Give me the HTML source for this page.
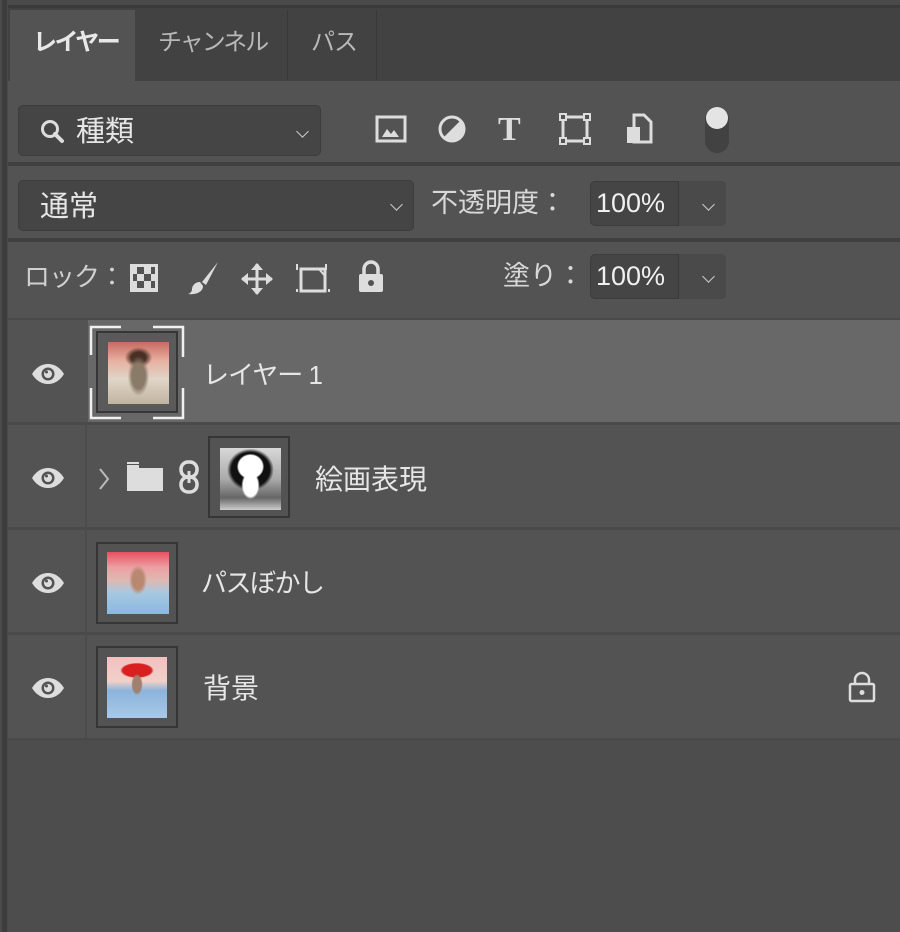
<!DOCTYPE html>
<html><head><meta charset="utf-8"><style>
*{margin:0;padding:0;box-sizing:border-box}
body{width:900px;height:932px;background:#4d4d4d;position:relative;overflow:hidden;font-family:"Liberation Sans","Noto Sans CJK JP",sans-serif;color:#dcdcdc}
.a{position:absolute}
.t{position:absolute;white-space:nowrap;line-height:1}
.box{position:absolute;background:#454545;border:1px solid #3c3c3c;border-radius:5px}
.chev{position:absolute;width:9px;height:9px;border-right:1.5px solid #ccc;border-bottom:1.5px solid #ccc;transform:rotate(45deg)}
.row{position:absolute;left:8px;right:0;background:#535353}
.eye{position:absolute;left:31px;width:34px;height:22px}
.frame{position:absolute;width:82px;height:82px;border:2px solid #363636}
</style></head><body>
<div class="a" style="left:0;top:0;width:900px;height:8px;background:#4a4a4a"></div>
<div class="a" style="left:0;top:5px;width:900px;height:3px;background:#3a3a3a"></div>
<div class="a" style="left:0;top:0;width:8px;height:932px;background:#4a4a4a"></div>
<div class="a" style="left:2px;top:0;width:5px;height:932px;background:#3d3d3d"></div>
<div class="a" style="left:8px;top:8px;width:892px;height:73px;background:#424242"></div>
<div class="a" style="left:10px;top:10px;width:125px;height:71px;background:#535353"></div>
<div class="a" style="left:287px;top:10px;width:1px;height:70px;background:#383838"></div>
<div class="a" style="left:376px;top:10px;width:1px;height:70px;background:#383838"></div>
<div class="t" style="left:33px;top:31px;font-size:24px;letter-spacing:-2.5px;color:#e8e8e8;font-weight:bold">レイヤー</div>
<div class="t" style="left:158px;top:31px;font-size:24px;letter-spacing:-2px;color:#b8b8b8">チャンネル</div>
<div class="t" style="left:311px;top:31px;font-size:24px;letter-spacing:-1px;color:#b8b8b8">パス</div>
<div class="a" style="left:8px;top:81px;width:892px;height:239px;background:#535353"></div>
<div class="a" style="left:8px;top:162px;width:892px;height:4px;background:#404040"></div>
<div class="a" style="left:8px;top:238px;width:892px;height:4px;background:#404040"></div>
<div class="box" style="left:18px;top:105px;width:303px;height:51px"></div>
<svg class="a" style="left:39px;top:118px" width="28" height="28" viewBox="0 0 28 28"><circle cx="11" cy="11" r="7.5" fill="none" stroke="#ddd" stroke-width="3"/><path d="M16 16l7 7" stroke="#ddd" stroke-width="4" stroke-linecap="round"/></svg>
<div class="t" style="left:76px;top:118px;font-size:29px;color:#e6e6e6">種類</div>
<div class="chev" style="left:298px;top:127px"></div>
<svg class="a" style="left:375px;top:114px" width="32" height="30" viewBox="0 0 32 30"><rect x="2" y="3" width="28" height="24" fill="none" stroke="#ddd" stroke-width="3"/><path d="M7 23l5-8 4 5 3-4 5 7z" fill="#ddd"/></svg>
<svg class="a" style="left:437px;top:114px" width="30" height="30" viewBox="0 0 30 30"><circle cx="15" cy="15" r="12" fill="none" stroke="#ddd" stroke-width="3"/><path d="M23.5 6.5A12 12 0 0 1 6.5 23.5z" fill="#ddd"/></svg>
<div class="t" style="left:498px;top:113px;font-size:34px;font-weight:bold;font-family:'Liberation Serif',serif;color:#ddd">T</div>
<svg class="a" style="left:558px;top:112px" width="34" height="34" viewBox="0 0 34 34"><rect x="5" y="5" width="24" height="24" fill="none" stroke="#ddd" stroke-width="3"/><g fill="#535353" stroke="#ddd" stroke-width="2"><rect x="2" y="2" width="6" height="6"/><rect x="26" y="2" width="6" height="6"/><rect x="2" y="26" width="6" height="6"/><rect x="26" y="26" width="6" height="6"/></g></svg>
<svg class="a" style="left:624px;top:113px" width="30" height="32" viewBox="0 0 30 32"><path d="M10 2h10l7 7v20H10z" fill="none" stroke="#ddd" stroke-width="3"/><rect x="3" y="14" width="13" height="16" fill="#ddd"/></svg>
<div class="a" style="left:705px;top:107px;width:24px;height:46px;border-radius:12px;background:#424242"></div>
<div class="a" style="left:706px;top:107px;width:22px;height:22px;border-radius:50%;background:#e4e4e4"></div>
<div class="box" style="left:18px;top:180px;width:396px;height:51px"></div>
<div class="t" style="left:40px;top:193px;font-size:29px;color:#e6e6e6">通常</div>
<div class="chev" style="left:392px;top:200px"></div>
<div class="t" style="left:431px;top:190px;font-size:27px;color:#d8d8d8">不透明度：</div>
<div class="box" style="left:590px;top:181px;width:136px;height:45px"></div>
<div class="a" style="left:678px;top:181px;width:48px;height:45px;background:#4a4a4a;border-left:1px solid #3a3a3a;border-radius:0 5px 5px 0"></div>
<div class="t" style="left:596px;top:190px;font-size:27px;color:#f0f0f0">100%</div>
<div class="chev" style="left:704px;top:200px"></div>
<div class="t" style="left:24px;top:264px;font-size:26px;letter-spacing:-1px;color:#d0d0d0">ロック：</div>
<svg class="a" style="left:129px;top:263px" width="30" height="30" viewBox="0 0 30 30"><rect x="1" y="1" width="28" height="28" fill="#ddd"/><g fill="#535353"><rect x="8" y="4" width="7" height="7"/><rect x="15" y="11" width="7" height="7"/><rect x="8" y="18" width="7" height="7"/><rect x="4" y="11" width="4" height="7"/><rect x="22" y="4" width="4" height="7"/><rect x="22" y="18" width="4" height="7"/></g></svg>
<svg class="a" style="left:186px;top:260px" width="36" height="36" viewBox="0 0 36 36"><path d="M32 2L16 22l4 3z" fill="#ddd"/><path d="M14 22c-5 0-8 4-8 7 0 2-1 4-4 5 8 1 15-2 15-8z" fill="#ddd"/></svg>
<svg class="a" style="left:240px;top:262px" width="34" height="34" viewBox="0 0 34 34"><path d="M17 2v30M2 17h30" stroke="#ddd" stroke-width="3"/><path d="M17 1l6 7H11zM17 33l6-7H11zM1 17l7 6V11zM33 17l-7 6V11z" fill="#ddd"/></svg>
<svg class="a" style="left:295px;top:261px" width="38" height="34" viewBox="0 0 38 34"><path d="M6 8h24v22H6z" fill="none" stroke="#ddd" stroke-width="3"/><path d="M2 3v6M31 3v6M2 28v3M34 28v3M24 8l6 7" stroke="#ddd" stroke-width="2"/></svg>
<svg class="a" style="left:356px;top:260px" width="30" height="34" viewBox="0 0 30 34"><path d="M8 14V9a7 7 0 0 1 14 0v5" fill="none" stroke="#ddd" stroke-width="3.5"/><rect x="3" y="14" width="24" height="18" rx="2" fill="#ddd"/><circle cx="15" cy="23" r="3" fill="#535353"/></svg>
<div class="t" style="left:503px;top:263px;font-size:27px;color:#d8d8d8">塗り：</div>
<div class="box" style="left:590px;top:254px;width:136px;height:45px"></div>
<div class="a" style="left:678px;top:254px;width:48px;height:45px;background:#4a4a4a;border-left:1px solid #3a3a3a;border-radius:0 5px 5px 0"></div>
<div class="t" style="left:596px;top:263px;font-size:27px;color:#f0f0f0">100%</div>
<div class="chev" style="left:704px;top:272px"></div>
<div class="a" style="left:8px;top:318px;width:892px;height:4px;background:#4a4a4a"></div>
<div class="row" style="top:320px;height:102px;background:#535353"></div>
<div class="a" style="left:88px;top:320px;width:812px;height:102px;background:#686868"></div>
<div class="row" style="top:424px;height:103px"></div>
<div class="row" style="top:530px;height:102px"></div>
<div class="row" style="top:635px;height:103px"></div>
<div class="a" style="left:8px;top:422px;width:892px;height:3px;background:#4a4a4a"></div>
<div class="a" style="left:8px;top:527px;width:892px;height:3px;background:#4a4a4a"></div>
<div class="a" style="left:8px;top:632px;width:892px;height:3px;background:#4a4a4a"></div>
<div class="a" style="left:8px;top:738px;width:892px;height:3px;background:#4a4a4a"></div>
<div class="a" style="left:85px;top:422px;width:2px;height:316px;background:#4c4c4c"></div>
<svg class="eye" style="top:363px" viewBox="0 0 34 22"><path d="M1 11C6 3 12 1 17 1s11 2 16 10c-5 8-11 10-16 10S6 19 1 11z" fill="#ddd"/><circle cx="17" cy="11" r="6.5" fill="#535353"/><circle cx="17" cy="11" r="4" fill="#ddd"/><circle cx="15.5" cy="9" r="1.5" fill="#535353"/></svg>
<svg class="eye" style="top:467px" viewBox="0 0 34 22"><path d="M1 11C6 3 12 1 17 1s11 2 16 10c-5 8-11 10-16 10S6 19 1 11z" fill="#ddd"/><circle cx="17" cy="11" r="6.5" fill="#535353"/><circle cx="17" cy="11" r="4" fill="#ddd"/><circle cx="15.5" cy="9" r="1.5" fill="#535353"/></svg>
<svg class="eye" style="top:572px" viewBox="0 0 34 22"><path d="M1 11C6 3 12 1 17 1s11 2 16 10c-5 8-11 10-16 10S6 19 1 11z" fill="#ddd"/><circle cx="17" cy="11" r="6.5" fill="#535353"/><circle cx="17" cy="11" r="4" fill="#ddd"/><circle cx="15.5" cy="9" r="1.5" fill="#535353"/></svg>
<svg class="eye" style="top:677px" viewBox="0 0 34 22"><path d="M1 11C6 3 12 1 17 1s11 2 16 10c-5 8-11 10-16 10S6 19 1 11z" fill="#ddd"/><circle cx="17" cy="11" r="6.5" fill="#535353"/><circle cx="17" cy="11" r="4" fill="#ddd"/><circle cx="15.5" cy="9" r="1.5" fill="#535353"/></svg>
<svg class="a" style="left:89px;top:325px" width="96" height="95" viewBox="0 0 96 95"><path d="M2 30V2h30M64 2h30v30M94 63v30H64M32 93H2V63" fill="none" stroke="#f0f0f0" stroke-width="2.5"/></svg>
<div class="frame" style="left:96px;top:331px;background:#5a5a5a"></div>
<div class="a" style="left:108px;top:342px;width:61px;height:62px;background:radial-gradient(ellipse 22% 40% at 50% 55%,#8a7a68 50%,transparent 80%),radial-gradient(ellipse 30% 22% at 50% 25%,#4a3024 40%,transparent 75%),linear-gradient(#c76a62 0%,#e8b0a0 30%,#e0d6c8 60%,#c0b4a0 100%)"></div>
<div class="t" style="left:203px;top:362px;font-size:26px;letter-spacing:-1px;color:#e6e6e6">レイヤー 1</div>
<svg class="a" style="left:98px;top:467px" width="12" height="24" viewBox="0 0 12 24"><path d="M2 2l8 10-8 10" fill="none" stroke="#bbb" stroke-width="2"/></svg>
<svg class="a" style="left:126px;top:461px" width="38" height="30" viewBox="0 0 38 30"><path d="M1 4h12v3h24v23H1z" fill="#ddd"/><rect x="1" y="1" width="12" height="2" fill="#ddd"/></svg>
<svg class="a" style="left:178px;top:459px" width="22" height="36" viewBox="0 0 22 36"><rect x="3" y="3" width="16" height="15" rx="7" fill="none" stroke="#ddd" stroke-width="3.5"/><rect x="3" y="18" width="16" height="15" rx="7" fill="none" stroke="#ddd" stroke-width="3.5"/><path d="M11 12v12" stroke="#ddd" stroke-width="3"/></svg>
<div class="frame" style="left:208px;top:436px"></div>
<div class="a" style="left:220px;top:448px;width:61px;height:62px;background:radial-gradient(ellipse 28% 26% at 50% 30%,#fff 70%,transparent 80%),radial-gradient(ellipse 20% 30% at 50% 60%,#fff 60%,transparent 75%),radial-gradient(ellipse 45% 40% at 50% 35%,#111 70%,transparent 85%),linear-gradient(#d8d8d8,#aaa 50%,#666 80%,#ccc)"></div>
<div class="t" style="left:315px;top:466px;font-size:28px;color:#e6e6e6">絵画表現</div>
<div class="frame" style="left:96px;top:542px"></div>
<div class="a" style="left:107px;top:552px;width:62px;height:62px;background:radial-gradient(ellipse 18% 30% at 50% 45%,#b88870 50%,transparent 80%),linear-gradient(#e85060 0%,#eca0a4 25%,#e0b8b0 45%,#a8c8e0 65%,#8ab8e0 100%)"></div>
<div class="t" style="left:201px;top:570px;font-size:26px;letter-spacing:-1.5px;color:#e6e6e6">パスぼかし</div>
<div class="frame" style="left:96px;top:646px"></div>
<div class="a" style="left:107px;top:657px;width:60px;height:61px;background:radial-gradient(ellipse 12% 22% at 50% 45%,#a08070 60%,transparent 80%),radial-gradient(ellipse 40% 18% at 50% 22%,#d82020 60%,transparent 70%),linear-gradient(#f4c0c0 0%,#f0d0c8 40%,#8cb4dc 55%,#a8c8e8 100%)"></div>
<div class="t" style="left:203px;top:675px;font-size:28px;color:#e6e6e6">背景</div>
<svg class="a" style="left:848px;top:671px" width="28" height="32" viewBox="0 0 28 32"><path d="M7 13V9a7 7 0 0 1 14 0v4" fill="none" stroke="#ddd" stroke-width="2.5"/><rect x="2" y="13" width="24" height="17" rx="1.5" fill="none" stroke="#ddd" stroke-width="2.5"/><circle cx="14" cy="21.5" r="2.5" fill="#ddd"/></svg>
</body></html>
